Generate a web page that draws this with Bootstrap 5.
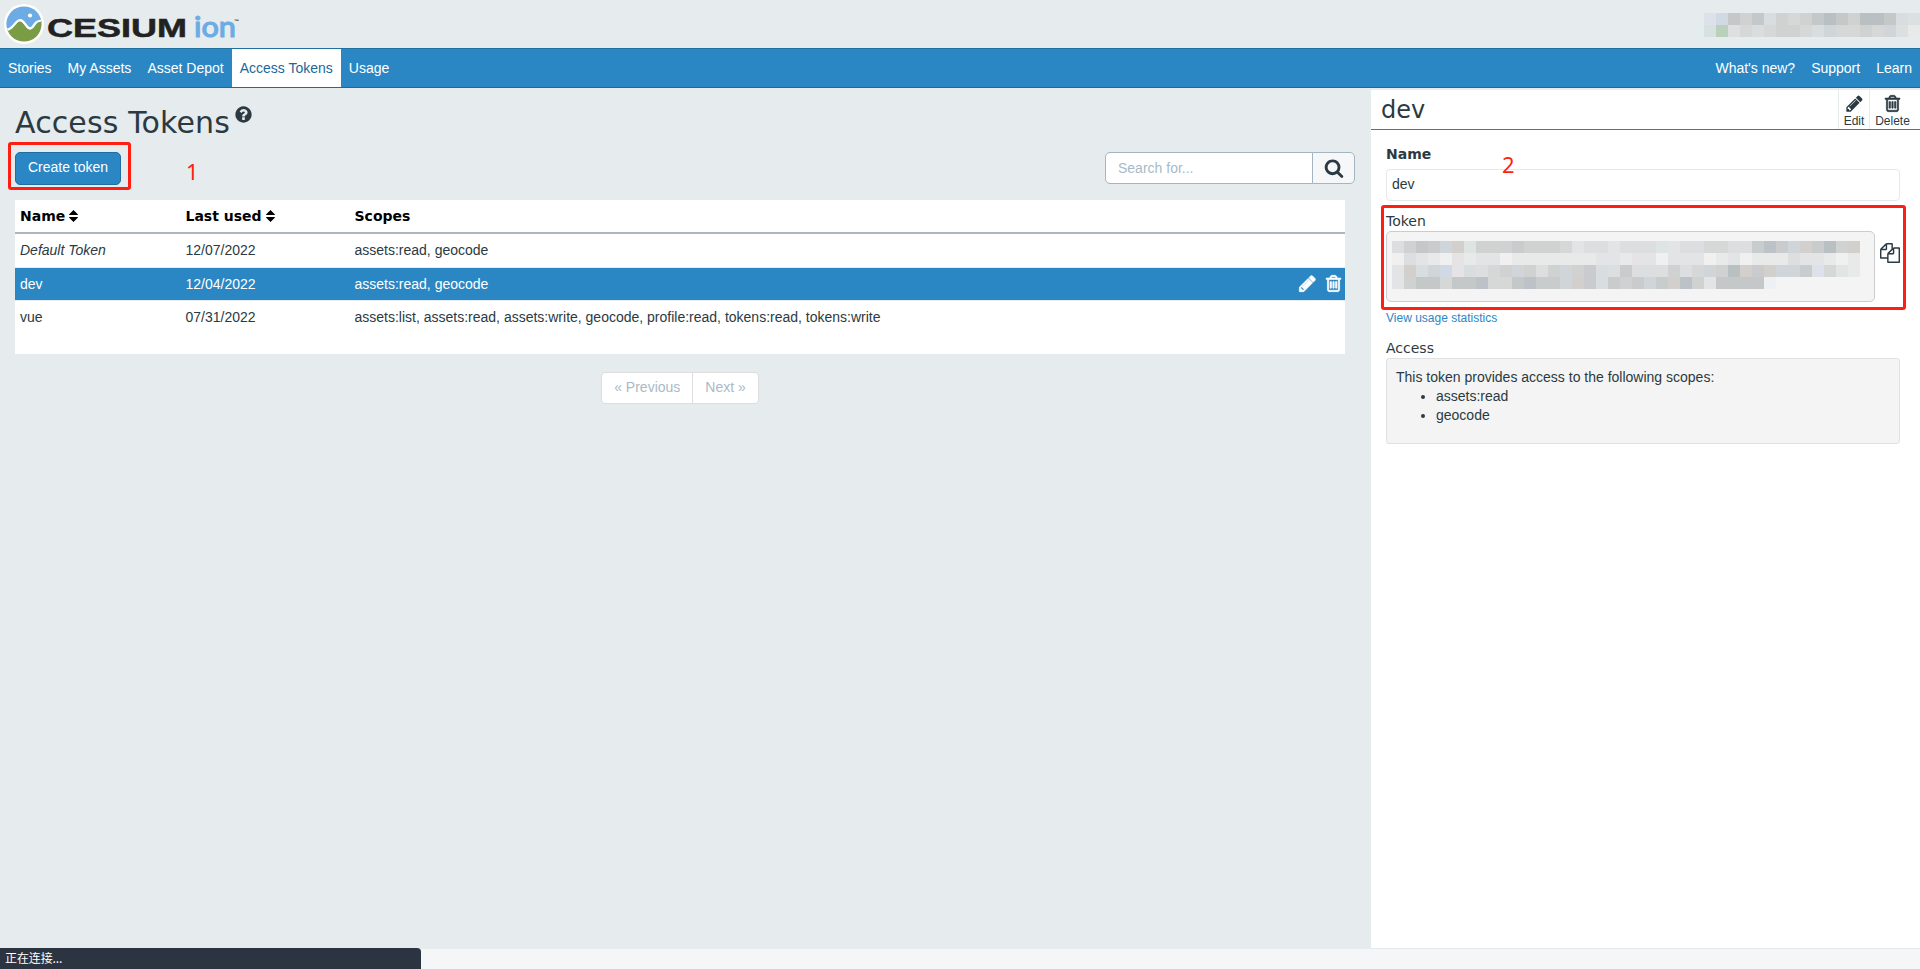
<!DOCTYPE html>
<html lang="en">
<head>
<meta charset="utf-8">
<title>Cesium ion - Access Tokens</title>
<link rel="stylesheet" href="https://cdn.jsdelivr.net/npm/bootstrap@5.3.0/dist/css/bootstrap.min.css">
<script src="https://cdn.jsdelivr.net/npm/bootstrap@5.3.0/dist/js/bootstrap.bundle.min.js"></script>
<style>
html{overflow:hidden}
body{font:14px/20px "Liberation Sans",Arial,sans-serif;color:#2b3a42;background:#e6ebed;height:969px;overflow:hidden}
.verd{font-family:"DejaVu Sans",Verdana,sans-serif;letter-spacing:0}
.top-bar{height:48px}
.main-nav{height:40px;background:#2a87c4;border-top:1px solid #1f6f9f;border-bottom:1px solid #1c6a9e}
.main-nav a{color:#fff;padding:9px 8px;line-height:20px;height:38px}
.main-nav a.active{background:#fff;color:#1e6798}
.ico{fill:currentColor;display:block;flex:none}
.ico-bold{stroke:currentColor;stroke-width:60px}
.content-area{width:1371px;padding:15px 15px 0}
.page-title{font-size:30px;line-height:36px;letter-spacing:.13px;padding-top:2px;margin:0 0 11px}
.page-title .ico{margin:0 0 0 4px}
.btn-create{font-size:14px;line-height:20px;height:33px;width:106px;padding:4px 0 7px;background:#2a87c4;border:1px solid #1f6ea3;color:#fff;border-radius:5px}
.search-box{width:250px;height:32px}
.search-box .form-control{font-size:14px;padding:0 12px 1px;border-color:#a4b5c1;border-radius:5px;height:32px}
.search-box .form-control::placeholder{color:#a9bac6}
.search-box .btn{border-color:#a4b5c1;background:#f5f7f9;color:#2b3a42;width:43px;padding:0;border-radius:5px;height:32px}
.token-table{width:1330px;height:154px;background:#fff;margin-top:15px}
.t-row{display:grid;grid-template-columns:165.5px 169px 1fr auto;padding:0 5px 1px;height:33px;align-items:center;border-bottom:1px solid #e6ebed}
.t-head{height:34px;padding-bottom:0;border-bottom:2px solid #a9b7c2;color:#000;font-weight:700}
.t-row.on{background:#2a87c4;color:#fff}
.pager .page-link{font-size:14px;line-height:20px;height:32px;padding:4px 12px;color:#a9bac6;border-color:#ddd;background:#fff}
.pager .page-item:first-child .page-link{border-radius:4px 0 0 4px}
.pager .page-item:last-child .page-link{border-radius:0 4px 4px 0}
.side{width:549px;margin-top:2px;background:#fff;border-bottom:1px solid #e6e9eb}
.side-head{height:40px;border-bottom:1px solid #547388;padding-left:10px}
.side-head h2{font-size:24px;line-height:40px;margin:0}
.act{font-size:12px;line-height:16px;border-left:1px solid #e6ebed;padding-top:4px}
.side-body{padding:14px 20px 0 15px}
.lbl{line-height:20px;height:20px}
.fld{height:32px;border:1px solid #e6e8ea;border-radius:4px;padding:4px 5px;line-height:20px}
.tok{width:491px;height:71px;background:#f4f4f4;border:1px solid #ccc;border-radius:5px;padding:9px 0 0 5px}
.mosaic{display:grid;grid-auto-rows:12px}
.acc{height:86px;background:#f4f4f4;border:1px solid #e0e1e2;border-radius:3px;padding:9px;line-height:19px}
.foot{height:20px;background:#f5f6f8}
.status{left:0;bottom:0;width:421px;height:21px;background:#2b3440;border-radius:0 4px 0 0;color:#fff;font:12px/20px "Noto Sans CJK SC",sans-serif;padding-left:5px;letter-spacing:-.1px}
.mark-box{border:3px solid #ff1e12;border-radius:3px}
.mark-num{color:#ff1e12;font:22px/24px "Noto Sans",sans-serif}
</style>
</head>
<body class="d-flex flex-column position-relative">
<svg width="0" height="0" class="position-absolute"><defs>
<symbol id="pencil" viewBox="0 0 1792 1792"><path d="M491 1536l91-91-235-235-91 91v107h128v128h107zm523-928q0-22-22-22-10 0-17 7l-542 542q-7 7-7 17 0 22 22 22 10 0 17-7l542-542q7-7 7-17zm-54-192l416 416-832 832h-416v-416zm683 96q0 53-37 90l-166 166-416-416 166-165q36-38 90-38 53 0 91 38l235 234q37 39 37 91z"/></symbol>
<symbol id="trash" viewBox="0 0 1792 1792"><path d="M704 736v576q0 14-9 23t-23 9h-64q-14 0-23-9t-9-23v-576q0-14 9-23t23-9h64q14 0 23 9t9 23zm256 0v576q0 14-9 23t-23 9h-64q-14 0-23-9t-9-23v-576q0-14 9-23t23-9h64q14 0 23 9t9 23zm256 0v576q0 14-9 23t-23 9h-64q-14 0-23-9t-9-23v-576q0-14 9-23t23-9h64q14 0 23 9t9 23zm128 724v-948h-896v948q0 22 7 40.5t14.5 27 10.5 8.5h832q3 0 10.5-8.5t14.5-27 7-40.5zm-672-1076h448l-48-117q-7-9-17-11h-317q-10 2-17 11zm928 32v64q0 14-9 23t-23 9h-96v948q0 83-47 143.5t-113 60.5h-832q-66 0-113-58.5t-47-141.5v-952h-96q-14 0-23-9t-9-23v-64q0-14 9-23t23-9h309l70-167q15-37 54-63t79-26h320q40 0 79 26t54 63l70 167h309q14 0 23 9t9 23z"/></symbol>
<symbol id="files" viewBox="0 0 1792 1792"><path d="M1696 384q40 0 68 28t28 68v1216q0 40-28 68t-68 28h-960q-40 0-68-28t-28-68v-288h-544q-40 0-68-28t-28-68v-672q0-40 20-88t48-76l408-408q28-28 76-48t88-20h416q40 0 68 28t28 68v328q68-40 128-40h416zm-544 213l-299 299h299v-299zm-640-384l-299 299h299v-299zm196 647l316-316v-416h-384v416q0 40-28 68t-68 28h-416v640h512v-256q0-40 20-88t48-76zm956 804v-1152h-384v416q0 40-28 68t-68 28h-416v640h896z"/></symbol>
<symbol id="search" viewBox="0 0 1792 1792"><path d="M1216 832q0-185-131.5-316.5t-316.5-131.5-316.5 131.5-131.5 316.5 131.5 316.5 316.5 131.5 316.5-131.5 131.5-316.5zm512 832q0 52-38 90t-90 38q-54 0-90-38l-343-342q-179 124-399 124-143 0-273.5-55.5t-225-150-150-225-55.5-273.5 55.5-273.5 150-225 225-150 273.5-55.5 273.5 55.5 225 150 150 225 55.5 273.5q0 220-124 399l343 343q37 37 37 90z"/></symbol>
<symbol id="question" viewBox="0 0 1792 1792"><path d="M1024 1376v-192q0-14-9-23t-23-9h-192q-14 0-23 9t-9 23v192q0 14 9 23t23 9h192q14 0 23-9t9-23zm256-672q0-88-55.5-163t-138.5-116-170-41q-243 0-371 213-15 24 8 42l132 100q7 6 19 6 16 0 25-12 53-68 86-92 34-24 86-24 48 0 85.5 26t37.5 59q0 38-20 61t-68 45q-63 28-115.5 86.5t-52.5 125.5v36q0 14 9 23t23 9h192q14 0 23-9t9-23q0-19 21.5-49.5t54.5-49.5q32-18 49-28.5t46-35 44.5-48 28-60.5 12.5-81zm384 192q0 209-103 385.5t-279.5 279.5-385.5 103-385.5-103-279.5-279.5-103-385.5 103-385.5 279.5-279.5 385.5-103 385.5 103 279.5 279.5 103 385.5z"/></symbol>
<symbol id="sort" viewBox="0 0 9 12"><path d="M4.500 0L9 4.600Q9 5 8.600 5H.4Q0 5 0 4.600zM4.500 12L9 7.400Q9 7 8.600 7H.4Q0 7 0 7.400z"/></symbol>
</defs></svg>

<header class="top-bar d-flex justify-content-between flex-shrink-0">
  <svg width="245" height="48" viewBox="0 0 245 48">
    <circle cx="24" cy="24" r="20" fill="#fff"/>
    <clipPath id="globe"><circle cx="24" cy="24" r="17.600"/></clipPath>
    <g clip-path="url(#globe)">
      <path d="M0 0H48V22H41L31 29 21 20 8 31 0 30z" fill="#6dabe4"/>
      <path d="M4 32L10 29 18 22Q20.500 20 23 23L27 28Q30 31 33 28L37.500 23Q39 21 44 21V48H4z" fill="#7a9c45"/>
      <path d="M5 30C9 30 11 28.500 13 26L17 21.500Q20.500 18.500 23.500 22L27.500 27Q30 29.500 32.500 27L36 22.500Q38 20.500 43 20.500" fill="none" stroke="#fff" stroke-width="2.200"/>
    </g>
    <circle cx="30" cy="15.500" r="2.100" fill="#fff"/>
    <g font-family="'Liberation Sans',sans-serif">
    <text x="47" y="36.500" font-size="26.500" font-weight="700" fill="#222" stroke="#222" stroke-width=".5" textLength="140" lengthAdjust="spacingAndGlyphs">CESIUM</text>
    <text x="194" y="36.500" font-family="Lato,sans-serif" font-size="29" font-weight="500" fill="#6dabe4" stroke="#6dabe4" stroke-width="1" textLength="42" lengthAdjust="spacingAndGlyphs">ion</text>
    <text x="234" y="22.500" font-size="5" font-weight="700" fill="#222">™</text></g>
  </svg>
  <div class="mosaic" id="user" style="grid-template-columns:repeat(18,12px);padding-top:13px"></div>
</header>

<nav class="main-nav nav d-flex flex-nowrap flex-shrink-0">
  <a class="text-decoration-none">Stories</a><a class="text-decoration-none">My Assets</a><a class="text-decoration-none">Asset Depot</a><a class="text-decoration-none active">Access Tokens</a><a class="text-decoration-none">Usage</a>
  <a class="text-decoration-none ms-auto">What's new?</a><a class="text-decoration-none">Support</a><a class="text-decoration-none">Learn</a>
</nav>

<div class="d-flex flex-grow-1">
  <main class="content-area">
    <h1 class="page-title verd fw-normal d-flex" style="letter-spacing:.13px">Access Tokens<svg class="ico" width="19" height="19"><use href="#question"/></svg></h1>
    <div class="d-flex justify-content-between" style="width:1340px">
      <button class="btn btn-create">Create token</button>
      <div class="input-group search-box">
        <input class="form-control" placeholder="Search for...">
        <button class="btn d-flex align-items-center justify-content-center"><svg class="ico" width="20" height="20"><use href="#search"/></svg></button>
      </div>
    </div>
    <div class="token-table">
      <div class="t-row t-head verd"><span class="d-flex align-items-center gap-1">Name<svg class="ico" width="9" height="12"><use href="#sort"/></svg></span><span class="d-flex align-items-center gap-1">Last used<svg class="ico" width="9" height="12"><use href="#sort"/></svg></span><span>Scopes</span></div>
      <div class="t-row" style="height:34px;padding-bottom:2px"><em>Default Token</em><span>12/07/2022</span><span>assets:read, geocode</span></div>
      <div class="t-row on"><span>dev</span><span>12/04/2022</span><span>assets:read, geocode</span><span class="d-flex" style="gap:7px;margin-right:-3px"><svg class="ico ico-bold" width="19" height="19"><use href="#pencil"/></svg><svg class="ico ico-bold" width="19" height="19"><use href="#trash"/></svg></span></div>
      <div class="t-row border-0" style="padding-bottom:2px"><span>vue</span><span>07/31/2022</span><span>assets:list, assets:read, assets:write, geocode, profile:read, tokens:read, tokens:write</span></div>
    </div>
    <ul class="pagination pager justify-content-center mb-0" style="margin-top:18px;width:1330px">
      <li class="page-item"><span class="page-link">« Previous</span></li>
      <li class="page-item"><span class="page-link">Next »</span></li>
    </ul>
  </main>

  <aside class="side">
    <div class="side-head d-flex">
      <h2 class="verd fw-normal flex-grow-1">dev</h2>
      <div class="act d-flex flex-column align-items-center" style="width:31px"><svg class="ico" width="19" height="19"><use href="#pencil"/></svg>Edit</div>
      <div class="act d-flex flex-column align-items-center" style="width:51px;padding-right:5px"><svg class="ico ico-bold" width="19" height="19"><use href="#trash"/></svg>Delete</div>
    </div>
    <div class="side-body">
      <div class="lbl verd fw-bold" style="margin-bottom:5px">Name</div>
      <div class="fld">dev</div>
      <div class="lbl verd" style="margin-top:10px">Token</div>
      <div class="d-flex">
        <div class="tok"><div class="mosaic" id="token" style="grid-template-columns:repeat(39,12px)"></div></div>
        <svg class="ico" width="20" height="20" style="margin:12px 0 0 5px"><use href="#files"/></svg>
      </div>
      <div style="font-size:12px;line-height:17px;margin-top:8px;color:#2a87c4">View usage statistics</div>
      <div class="lbl verd" style="margin-top:11px">Access</div>
      <div class="acc">This token provides access to the following scopes:
        <ul class="mb-0" style="padding-left:40px"><li>assets:read</li><li>geocode</li></ul></div>
    </div>
  </aside>
</div>
<footer class="foot flex-shrink-0"></footer>

<div class="status position-absolute">正在连接...</div>
<div class="mark-box position-absolute" style="left:8px;top:142px;width:123px;height:48px"></div>
<div class="mark-box position-absolute" style="left:1381px;top:205px;width:525px;height:105px"></div>
<div class="mark-num position-absolute" style="left:186px;top:159px">1</div>
<div class="mark-num position-absolute" style="left:1502px;top:152px">2</div>

<script>
// Redacted strips: one letter per 12px cell
const tones={a:'#babfc2',b:'#c4c8c9',c:'#c9cccc',d:'#d0d1d1',e:'#d6d8d8',f:'#dddedf',g:'#e2e4e5',h:'#e8e9e9',i:'#eff0ef',j:'#d0d5d9',k:'#cacbcd',l:'#d2cfcd',m:'#e5e3e4',n:'#bcc2c7',o:'#d8dde0',p:'#dee3e4',q:'#edf1f4',r:'#dde1e9',s:'#d1d9e5',t:'#d7e1df',u:'#b9d1bb',w:'#dde0e1',_:'transparent'};
const paint=(id,rows)=>{document.getElementById(id).innerHTML=rows.join('').split('').map(c=>`<i style="background:${tones[c]}"></i>`).join('')};
paint('user',['rsbdbodedbabdaabow','tuweoeddeojeedejwh']);
paint('token',[
 'fdbcjlpdddkdddegffgfffpgffeeffcnkjlcadlj',
 'ifghimhggihhhhhhhgghmgigggihgihhhfgghih',
 'glojsmofedjdfdjdkofkfffdfejdalkljjkreghe',
 'gdbbebbneebnccjlkokdkjclndgbbbbq_______'].map(r=>r.slice(0,39)));
</script>
</body>
</html>
